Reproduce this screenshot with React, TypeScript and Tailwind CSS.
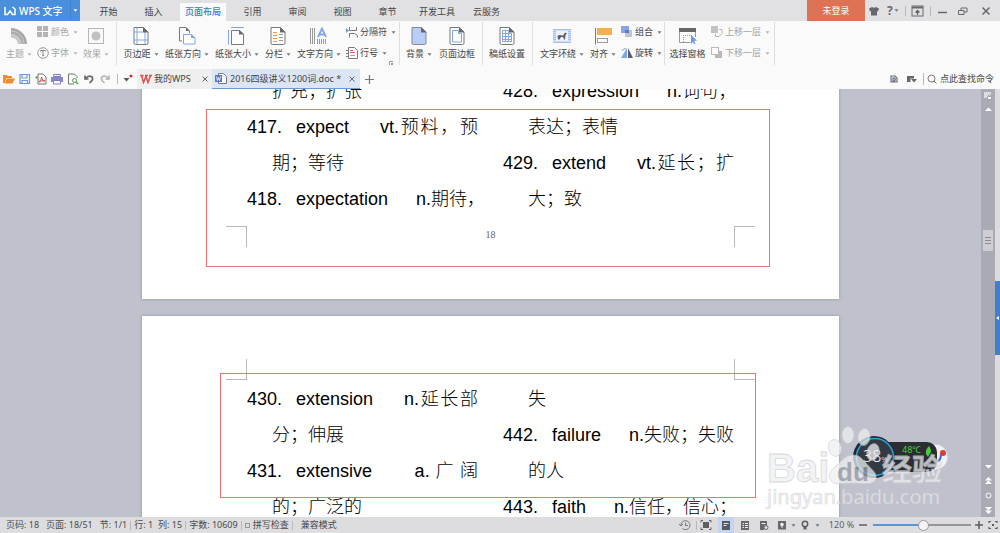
import React from 'react';

type Kids = { children?: React.ReactNode };

const G = '#77797d';
const B = '#7ea6ec';

function Svg({ w, h, children }: Kids & { w: number; h: number }) {
  return (
    <svg width={w} height={h} viewBox={`0 0 ${w} ${h}`} fill="none" className="block shrink-0" aria-hidden="true">
      {children}
    </svg>
  );
}

function Caret({ className = 'text-[#777]' }: { className?: string }) {
  return (
    <span className={className}>
      <Svg w={5} h={3}>
        <path d="M0.5 0.2h4L2.5 2.8z" fill="currentColor" />
      </Svg>
    </span>
  );
}

function Sep({ className = 'h-[10px]' }: { className?: string }) {
  return <span className={`w-px shrink-0 bg-[#b9b9bc] ${className}`} />;
}

const Sheet = ({ children }: Kids) => (
  <Svg w={20} h={20}>
    <path d="M3 1.500h9.500l4.500 4.500v11q0 1.500-1.500 1.500h-11q-1.500 0-1.500-1.500z" fill="#fff" stroke={G} />
    {children}
    <path d="M12 1v5.500h5.500z" fill="#66686c" />
  </Svg>
);

const icons = {
  theme: (
    <Svg w={20} h={20}>
      <path d="M2 2a16 16 0 0 1 16 16h-5.500A10.500 10.500 0 0 0 2 8z" fill="#a9a9a9" />
      <path d="M2 5a13 13 0 0 1 13 13" stroke="#c9c9c9" />
      <path d="M2 8a10.500 10.500 0 0 1 10.500 10H9A7 7 0 0 0 2 11.500z" fill="#c6c6c6" />
    </Svg>
  ),
  effect: (
    <Svg w={20} h={20}>
      <rect x="2.500" y="2.500" width="15" height="15" stroke="#b5b5b5" />
      <circle cx="10" cy="10" r="4.500" fill="#c0c0c0" />
    </Svg>
  ),
  margins: (
    <Sheet>
      <path d="M6 2v16M14 6v12M3 6h9M3 14h14" stroke={B} />
    </Sheet>
  ),
  orientation: (
    <Svg w={20} h={20}>
      <path d="M5 15H2.500V1.500H9L12.500 5v2" stroke={G} />
      <path d="M9 1.500V5h3.500z" fill="#66686c" />
      <path d="M6.500 8.500h8l3.500 3.500v6H6.500z" fill="#fff" stroke={B} />
      <path d="M14 8.500V12h4z" fill={B} />
    </Svg>
  ),
  size: (
    <Svg w={20} h={20}>
      <path d="M1.500 4v14.500M4 1.500h13" stroke={B} />
      <path d="M4.500 4.500h8L16.500 8v10.500h-12z" fill="#fff" stroke={G} />
      <path d="M12 4v4.500h5z" fill="#66686c" />
    </Svg>
  ),
  columns: (
    <Sheet>
      <path d="M5 6.500h4M5 9.500h4M5 12.500h4M5 15.500h4" stroke="#ef9a5f" />
      <path d="M11 8.500h4M11 11.500h4M11 14.500h4" stroke="#999" />
    </Sheet>
  ),
  textdir: (
    <Svg w={20} h={20}>
      <path d="M1.500 2v16M3.500 2v16M5.500 2v16M8.500 13v5M10.500 13v5M12.500 13v5M14.500 13v5M16.500 13v5" stroke="#96989c" />
      <path d="M9 11l4-8.500 4 8.500M10.500 8.500h5" stroke={B} strokeWidth="1.800" />
    </Svg>
  ),
  background: (
    <Svg w={20} h={20}>
      <path d="M3 1.500h9.500l4.500 4.500v11q0 1.500-1.500 1.500h-11q-1.500 0-1.500-1.500z" fill="#b8cef5" stroke="#84899a" />
      <path d="M12 1v5.500h5.500z" fill="#66686c" />
    </Svg>
  ),
  border: (
    <Sheet>
      <path d="M5.500 4.500h6v3h3v8.500h-9z" stroke={B} />
    </Sheet>
  ),
  grid: (
    <Sheet>
      <path d="M5.500 4.500h6v3h3v8h-9zM8.500 4.500v11M11.500 7v9M5.500 7.500h7M5.500 10.500h9M5.500 13.500h9" stroke={B} />
    </Sheet>
  ),
  wrap: (
    <Svg w={20} h={20}>
      <rect x="1" y="3" width="18" height="14" fill="#cddcf8" />
      <path d="M1 3.500h18M1 5.500h18M1 7.500h18M1 9.500h18M1 11.500h18M1 13.500h18M1 16.500h18" stroke="#a3bff1" />
      <rect x="4" y="5" width="12" height="10" fill="#edf2fc" />
      <path d="M5.500 10l1.500-1 4 .5L13 6.500l2 1-1.500 1.500-.5 4.500h-1l-1-2.500H9l-1.500 2.500H6z" fill="#5d5f63" />
    </Svg>
  ),
  align: (
    <Svg w={20} h={20}>
      <path d="M2.500 2v16.500" stroke={G} />
      <rect x="4" y="2" width="15" height="7" fill="#f2b24a" />
      <rect x="4.500" y="12.500" width="10" height="4" fill="#fff" stroke="#999" />
    </Svg>
  ),
  pane: (
    <Svg w={20} h={20}>
      <rect x="1" y="2" width="17" height="4" fill="#66686c" />
      <path d="M1.500 6v10.500h11M17.500 6v5" stroke="#999" />
      <path d="M5 9.500h10M5.500 9v7" stroke="#999" strokeDasharray="1 1" />
      <path d="M13 9v9l2-2 1.500 2.500 1-1-1.500-2.500 3-.5z" fill="#6f98ea" />
    </Svg>
  ),
};

const small = {
  color: (
    <Svg w={12} h={12}>
      <path d="M0 0h5v5H0zM6 0h5v5H6zM0 6h5v5H0zM6 6h5v5H6z" fill="#b3b3b3" />
    </Svg>
  ),
  font: (
    <Svg w={12} h={12}>
      <circle cx="6" cy="6" r="5.300" stroke="#999" />
      <path d="M3.500 4.500v-1h5v1M6 3.500v5M5 8.700h2" stroke="#888" />
    </Svg>
  ),
  breaks: (
    <Svg w={12} h={12}>
      <path d="M0 2l3 2.500L0 7z" fill="#6d98e8" />
      <path d="M3.500 1v3.500h7V1M3.500 11.500v-4h5l3 2v2" stroke={G} />
    </Svg>
  ),
  lineno: (
    <Svg w={12} h={12}>
      <path d="M2.500 .5h6l3 3v8h-9z" fill="#fff" stroke={G} />
      <path d="M0 3.500h2M0 6.500h2M0 9.500h2" stroke={G} />
      <path d="M4 3.500h3M4 5.500h5" stroke="#e06060" />
      <path d="M4 8.500h5" stroke="#aaa" />
    </Svg>
  ),
  group: (
    <Svg w={12} h={12}>
      <rect x="4" y="4" width="7" height="7" fill="#c3c5ca" />
      <rect x="0" y="0" width="8" height="7" fill="#87a4e8" />
      <rect x="4" y="4" width="4" height="3" fill="#5f7cc4" />
    </Svg>
  ),
  rotate: (
    <Svg w={12} h={12}>
      <path d="M6 1v10H0z" fill="#7ea6ec" />
      <path d="M7 1v10h5z" fill="#5d6066" />
      <path d="M1 4q1-2.500 4-2.500" stroke="#7ea6ec" />
    </Svg>
  ),
  up: (
    <Svg w={12} h={12}>
      <rect x="0" y="0" width="7" height="7" fill="#c2c2c2" />
      <path d="M8 3.500h3v4L8 10.500H4.500V7.500" stroke="#b5b5b5" />
    </Svg>
  ),
  down: (
    <Svg w={12} h={12}>
      <rect x=".5" y=".5" width="7" height="7" stroke="#bbb" />
      <path d="M8 4h3v7H4V8h4z" fill="#b8b8b8" />
    </Svg>
  ),
};

function Big({ icon, label, w, caret, dim }: { icon: React.ReactNode; label: string; w: string; caret?: boolean; dim?: boolean }) {
  return (
    <button className={`flex shrink-0 flex-col items-center gap-[2px] pt-1 ${w} ${dim ? 'text-[#a5a5a5]' : 'text-[#444]'}`}>
      {icon}
      <span className="flex items-center gap-[3px] leading-3 whitespace-nowrap">
        {label}
        {caret && <Caret className={dim ? 'text-[#b5b5b5]' : 'text-[#777]'} />}
      </span>
    </button>
  );
}

function Pair({ items, w, dim }: { items: [React.ReactNode, string][]; w: string; dim?: boolean }) {
  return (
    <div className={`flex shrink-0 flex-col gap-[9px] pt-1 pl-[2px] ${w}`}>
      {items.map(([icon, label]) => (
        <button key={label} className={`flex items-center gap-[2px] leading-3 whitespace-nowrap ${dim ? 'text-[#a5a5a5]' : 'text-[#444]'}`}>
          {icon}
          {label}
          <span className="pl-[2px]"><Caret className={dim ? 'text-[#b5b5b5]' : 'text-[#777]'} /></span>
        </button>
      ))}
    </div>
  );
}

function TitleBar() {
  return (
    <header className="flex h-[21px] shrink-0 items-stretch bg-[#e1e1e3] text-[#444]">
      <button className="flex w-20 shrink-0 items-center bg-[#4a8fdc] pl-1 text-white">
        <Svg w={12} h={10}>
          <path d="M1 1v7.500h2.500L6 5l2.500 3.500H11V3L8.500 1" stroke="#fff" strokeWidth="1.500" />
        </Svg>
        <span className="ml-[3px] text-[10px] leading-4 font-medium whitespace-nowrap">WPS 文字</span>
        <span className="ml-auto flex h-full w-[10px] items-center justify-center border-l border-[#4384cf]">
          <Caret className="text-white" />
        </span>
      </button>
      <nav className="ml-[6px] flex shrink-0 items-end">
        {['开始', '插入'].map((t) => (
          <button key={t} className="h-[18px] w-[45px]">{t}</button>
        ))}
        <button className="mx-1 h-[18px] w-[46px] bg-[#fafafa] font-medium text-[#3a7bcb]">页面布局</button>
        {['引用', '审阅', '视图', '章节'].map((t) => (
          <button key={t} className="h-[18px] w-[45px]">{t}</button>
        ))}
        <button className="h-[18px] w-[54px]">开发工具</button>
        <button className="h-[18px] w-[45px]">云服务</button>
      </nav>
      <button className="ml-auto w-[58px] shrink-0 bg-[#de7254] text-white">未登录</button>
      <div className="flex w-[135px] shrink-0 items-center pl-1 text-[#66686c]">
        <button aria-label="皮肤">
          <Svg w={10} h={10}>
            <path d="M3 1q2 1.500 4 0l3 1.500-1 3-1-.5v4.500H2V5l-1 .5-1-3z" fill="currentColor" />
          </Svg>
        </button>
        <button aria-label="帮助" className="ml-2 flex items-center gap-px text-[12px] leading-4 font-bold">
          ?<Caret />
        </button>
        <Sep className="ml-[6px] h-[10px]" />
        <button aria-label="功能区" className="ml-[5px]">
          <Svg w={13} h={12}>
            <rect x="1" y="1" width="11" height="10" stroke="currentColor" />
            <path d="M1 2.500h11" stroke="currentColor" strokeWidth="2" />
            <path d="M6.500 10V6M4.500 7.500l2-2 2 2" stroke="currentColor" strokeWidth="1.300" />
          </Svg>
        </button>
        <Sep className="ml-[6px] h-[10px]" />
        <button aria-label="最小化" className="ml-[7px]">
          <Svg w={10} h={10}><path d="M0 6.500h9" stroke="currentColor" strokeWidth="1.500" /></Svg>
        </button>
        <button aria-label="还原" className="ml-[10px]">
          <Svg w={10} h={10}><path d="M.5 4.500h5.500v4H.5zM3 4V2h6v4H6" stroke="currentColor" /></Svg>
        </button>
        <button aria-label="关闭" className="ml-[13px]">
          <Svg w={10} h={10}><path d="M1.500 1.500l7 7M8.500 1.500l-7 7" stroke="currentColor" strokeWidth="1.500" /></Svg>
        </button>
      </div>
    </header>
  );
}

function Group({ children, className }: Kids & { className: string }) {
  return <div className={`flex shrink-0 border-r border-[#dedede] ${className}`}>{children}</div>;
}

function Ribbon() {
  return (
    <section className="flex h-[48px] shrink-0 overflow-hidden pt-px pb-1">
      <Group className="w-[117px] pl-[3px]">
        <Big icon={icons.theme} label="主题" w="w-8" caret dim />
        <Pair w="w-[45px]" dim items={[[small.color, '颜色'], [small.font, '字体']]} />
        <Big icon={icons.effect} label="效果" w="w-8" caret dim />
      </Group>
      <Group className="relative w-[283px] pl-[3px]">
        <Big icon={icons.margins} label="页边距" w="w-[42px]" caret />
        <Big icon={icons.orientation} label="纸张方向" w="w-[50px]" caret />
        <Big icon={icons.size} label="纸张大小" w="w-[50px]" caret />
        <Big icon={icons.columns} label="分栏" w="w-8" caret />
        <Big icon={icons.textdir} label="文字方向" w="w-[50px]" caret />
        <Pair w="w-[50px]" items={[[small.breaks, '分隔符'], [small.lineno, '行号']]} />
        <span className="absolute right-[6px] bottom-0">
          <Svg w={4} h={4}><path d="M.5 4V.5H4M2 2l1.500 1.500M3.500 2v1.500H2" stroke="#999" /></Svg>
        </span>
      </Group>
      <Group className="w-[83px] pl-[3px]">
        <Big icon={icons.background} label="背景" w="w-8" caret />
        <Big icon={icons.border} label="页面边框" w="w-[44px]" />
      </Group>
      <Group className="w-[50px]">
        <Big icon={icons.grid} label="稿纸设置" w="w-12" />
      </Group>
      <Group className="w-[132px] pl-[4px]">
        <Big icon={icons.wrap} label="文字环绕" w="w-[50px]" caret />
        <Big icon={icons.align} label="对齐" w="w-8" caret />
        <Pair w="w-[45px]" items={[[small.group, '组合'], [small.rotate, '旋转']]} />
      </Group>
      <Group className="w-[110px] pl-px">
        <Big icon={icons.pane} label="选择窗格" w="w-[43px]" />
        <Pair w="w-[65px]" dim items={[[small.up, '上移一层'], [small.down, '下移一层']]} />
      </Group>
    </section>
  );
}

const quick: [string, React.ReactNode][] = [
  ['打开', <path key="a" d="M0 10V2h4l1 1h4v2H3.500L1.500 10M1.500 10.500L4 5.500h8l-2.500 5z" fill="#f08c2e" />],
  ['保存', <path key="a" d="M1 1.500h9.500v9H1zM3 1.500v3.500h5V1.500M3 10.500v-3h5.500v3" stroke="#6c98e0" strokeWidth="1.200" />],
  ['输出为PDF', <g key="a"><path d="M3 1h5l3 3v7H3z" stroke="#777" /><path d="M4 9q3-3 2.500-5Q7 8 10 8 6.500 7 4 9z" stroke="#d4504c" /><path d="M0 4.500l2.500-2v4z" fill="#5ba85b" /></g>],
  ['打印', <g key="a"><path d="M2.500 1.500h7v2h-7z" stroke="#7e7ac4" /><path d="M0 4h12v5H0z" fill="#8b86cc" /><path d="M2.500 7.500h7v3.500h-7z" fill="#fff" stroke="#7e7ac4" /></g>],
  ['打印预览', <g key="a"><path d="M7 11H1.500V1h6l2.500 2.500V5" stroke="#777" /><circle cx="7.500" cy="7.500" r="2" stroke="#4e9e50" /><path d="M9 9l2 2" stroke="#4e9e50" strokeWidth="1.500" /></g>],
  ['撤销', <path key="a" d="M2 2.500V6h3.500M2.500 5.500Q6 1.500 9 4q2 3-2.500 6" stroke="#66686c" strokeWidth="1.700" />],
  ['恢复', <path key="a" d="M10 2.500V6H6.500M9.500 5.500Q6 1.500 3 4q-2 3 2.500 6" stroke="#b0b0b0" strokeWidth="1.500" />],
];

function CloseX() {
  return <Svg w={6} h={6}><path d="M.5 .5l5 5M5.500 .5l-5 5" stroke="#666" /></Svg>;
}

function QuickBar() {
  return (
    <section className="flex h-[20px] shrink-0 items-stretch text-[#444]">
      <div className="flex items-center gap-1 pl-[3px]">
        {quick.map(([name, art]) => (
          <button key={name} aria-label={name}><Svg w={12} h={12}>{art}</Svg></button>
        ))}
      </div>
      <div className="flex w-[26px] shrink-0 items-center">
        <Sep className="ml-[6px] h-[10px]" />
        <button aria-label="更多" className="ml-[5px]">
          <Svg w={10} h={10}>
            <path d="M.5 4h6l-3 3.500z" fill="#555" />
            <circle cx="8" cy="2" r="1.500" fill="#f02020" />
          </Svg>
        </button>
      </div>
      <div className="flex w-[75px] shrink-0 items-center bg-[#efefef] pl-[3px]">
        <Svg w={12} h={10}>
          <path d="M0 1.500h3.500M1.500 1.500L3.500 8.500l2.500-6 2 6 2.500-7M5 1.500h3M9 1.500h3" stroke="#e0504c" strokeWidth="1.500" />
        </Svg>
        <button className="ml-[2px] whitespace-nowrap">我的WPS</button>
        <button aria-label="关闭我的WPS" className="mr-1 ml-auto"><CloseX /></button>
      </div>
      <div className="flex w-[148px] shrink-0 items-center border-b border-[#6d9bd8] bg-[#dbe5f3] pl-[3px]">
        <Svg w={12} h={11}>
          <path d="M3.500 .5h5l3 3v7h-8z" fill="#fff" stroke={G} />
          <path d="M0 2h7v7H0z" fill="#5b77c2" />
          <path d="M1.500 3.500l1 4 1-3 1 3 1-4" stroke="#fff" strokeWidth=".8" />
        </Svg>
        <button className="ml-[3px] whitespace-nowrap">2016四级讲义1200词.doc *</button>
        <button aria-label="关闭文档" className="mr-[5px] ml-auto"><CloseX /></button>
      </div>
      <button aria-label="新建" className="ml-[5px]">
        <Svg w={9} h={9}><path d="M4.500 0v9M0 4.500h9" stroke="#777" strokeWidth="1.200" /></Svg>
      </button>
      <div className="ml-auto flex items-center pr-[6px]">
        <button aria-label="文档">
          <Svg w={8} h={8}><path d="M1 1h4l2 2v4H1zM3 3v3h1.500q1.500-1.500 0-3z" stroke="#66707c" strokeWidth="1.200" /></Svg>
        </button>
        <button aria-label="标记" className="ml-[9px]">
          <Svg w={10} h={8}><path d="M0 1h7v2.500H3.500V7H0zM4 4h6L7 7.500z" fill="#66686c" /></Svg>
        </button>
        <Sep className="ml-[6px] h-3" />
        <button className="ml-[3px] flex items-center gap-[3px] whitespace-nowrap">
          <Svg w={10} h={10}>
            <circle cx="4.500" cy="4.500" r="3.500" stroke="#777" />
            <path d="M7 7l2.500 2.500" stroke="#777" />
          </Svg>
          点此查找命令
        </button>
      </div>
    </section>
  );
}

function Entry({ n, word, justify, children }: Kids & { n: string; word: string; justify?: boolean }) {
  return (
    <p className="flex h-9 whitespace-nowrap">
      <span className="w-[49px] shrink-0">{n}.</span>
      <span className="shrink-0">{word}</span>
      {justify ? (
        <span className="ml-[31px] flex-1 [text-align-last:justify]">{children}</span>
      ) : (
        <span className="ml-7">{children}</span>
      )}
    </p>
  );
}

function More({ children }: Kids) {
  return <p className="h-9 pl-[25px] whitespace-nowrap">{children}</p>;
}

function Columns({ children }: Kids) {
  return (
    <div className="grid grid-cols-2 gap-x-[25px] px-[105px] font-['Liberation_Sans','Noto_Sans_CJK_SC',sans-serif] text-[18px] leading-9 font-light text-black">
      {children}
    </div>
  );
}

function Pages() {
  return (
    <main className="min-w-0 flex-1 overflow-hidden bg-[#bfc2cc]">
      <article className="relative mx-auto -mt-4 h-[226px] w-[697px] bg-white shadow-[0_0_3px_#8f929c]">
        <Columns>
          <div>
            <More>扩充；扩张</More>
            <Entry n="417" word="expect" justify>vt.预料，预</Entry>
            <More>期；等待</More>
            <Entry n="418" word="expectation">n.期待，</Entry>
          </div>
          <div>
            <Entry n="428" word="expression">n.词句；</Entry>
            <More>表达；表情</More>
            <Entry n="429" word="extend" justify>vt.延长；扩</Entry>
            <More>大；致</More>
          </div>
        </Columns>
        <footer className="flex justify-between px-[84px] pt-[9px]">
          <span className="size-[21px] border-t border-r border-[#b8b8b8]" />
          <span className="pt-[3px] font-['Liberation_Serif',serif] text-[10px] leading-3 text-[#666]">18</span>
          <span className="size-[21px] border-t border-l border-[#b8b8b8]" />
        </footer>
        <div className="absolute top-9 left-16 h-[158px] w-[564px] border border-[#fa7070]" />
      </article>
      <article className="relative mx-auto mt-[17px] h-[900px] w-[697px] bg-white pt-[43px] shadow-[0_0_3px_#8f929c]">
        <div className="mb-px flex justify-between px-[84px]">
          <span className="size-[21px] border-r border-b border-[#b8b8b8]" />
          <span className="size-[21px] border-b border-l border-[#b8b8b8]" />
        </div>
        <Columns>
          <div>
            <Entry n="430" word="extension" justify>n.延长部</Entry>
            <More>分；伸展</More>
            <Entry n="431" word="extensive" justify>&nbsp; a. 广 阔</Entry>
            <More>的；广泛的</More>
          </div>
          <div>
            <More>失</More>
            <Entry n="442" word="failure">n.失败；失败</Entry>
            <More>的人</More>
            <Entry n="443" word="faith">n.信任，信心；</Entry>
          </div>
        </Columns>
        <div className="absolute top-[57px] left-[78px] h-[125px] w-[536px] border border-[#fa7070]" />
      </article>
    </main>
  );
}

function ScrollRail() {
  return (
    <aside className="flex w-[19px] shrink-0">
      <div className="flex w-[14px] flex-col items-center bg-[#a9aab3] pt-[3px] pb-[3px]">
        <Svg w={10} h={8}>
          <path d="M1 0h7v6H1z" fill="#dcdde2" />
          <path d="M4.500 4.500h4v3h-4zM5.500 4V3h2v1" fill="#fff" stroke="#8c8d96" strokeWidth=".7" />
        </Svg>
        <button aria-label="向上滚动" className="mt-[7px]"><Svg w={7} h={4}><path d="M0 4l3.500-3.500L7 4z" fill="#fff" /></Svg></button>
        <button aria-label="滚动条" className="mt-[119px] flex h-[21px] w-[10px] flex-col items-center justify-center gap-[2px] bg-[#cfcfd3]">
          <span className="h-px w-[6px] bg-[#8c8c92]" />
          <span className="h-px w-[6px] bg-[#8c8c92]" />
          <span className="h-px w-[6px] bg-[#8c8c92]" />
        </button>
        <div className="mt-auto flex flex-col items-center gap-[8px]">
          <button aria-label="向下滚动"><Svg w={7} h={4}><path d="M0 0h7L3.500 3.500z" fill="#fff" /></Svg></button>
          <button aria-label="上一页"><Svg w={7} h={7}><path d="M0 3.500L3.500 0 7 3.500zM0 7l3.500-3.500L7 7z" fill="#fff" /></Svg></button>
          <button aria-label="选择浏览对象"><Svg w={7} h={7}><circle cx="3.500" cy="3.500" r="2.500" stroke="#fff" /></Svg></button>
          <button aria-label="下一页"><Svg w={7} h={7}><path d="M0 0h7L3.500 3.500zM0 3.500h7L3.500 7z" fill="#fff" /></Svg></button>
        </div>
      </div>
      <div className="w-[5px] bg-[#dcdcde] pt-[192px]">
        <button aria-label="展开任务窗格" className="flex h-[74px] w-[5px] items-center justify-center bg-[#3e80d0]">
          <Svg w={3} h={4}><path d="M3 0v4L0 2z" fill="#fff" /></Svg>
        </button>
      </div>
    </aside>
  );
}

function Gadget() {
  return (
    <div className="absolute right-[51px] bottom-[38px] h-[44px] w-[98px]">
      <svg width="98" height="44" viewBox="0 0 98 44" fill="none" aria-hidden="true">
        <circle cx="84" cy="22" r="13" fill="#f0f1f3" stroke="#c8cad0" />
        <path d="M82 27q8 1 8-8" stroke="#3a74d4" strokeWidth="2" />
        <circle cx="92" cy="18" r="3" fill="#e03a3a" />
        <rect x="20" y="7" width="66" height="30" rx="10" fill="#2b2d33" />
        <circle cx="23" cy="22" r="21" fill="#23272e" />
        <circle cx="24" cy="22" r="18.500" fill="#333b42" stroke="#29a3e0" strokeWidth="1.500" />
        <path d="M78 11q-4 4-3 8l2 3 1-2q4-3 0-9z" fill="#46cf38" />
      </svg>
      <span className="absolute top-[11px] left-3 text-[16px] leading-5 font-light text-white">
        38<span className="text-[8px]">%</span>
      </span>
      <span className="absolute top-[9px] left-[51px] text-[9px] leading-3 text-[#46cf38]">48℃</span>
    </div>
  );
}

function Watermark() {
  return (
    <div className="pointer-events-none absolute right-[50px] bottom-0 h-[92px] w-[185px] opacity-75">
      <svg width="185" height="92" viewBox="0 0 185 92" fill="#eeeff1" stroke="#cbccd1" strokeWidth=".8" aria-hidden="true">
        <ellipse cx="70" cy="23" rx="6.500" ry="8.500" transform="rotate(-12 70 23)" />
        <ellipse cx="83" cy="10" rx="6" ry="8.500" />
        <ellipse cx="99" cy="12" rx="6" ry="8.500" transform="rotate(8 99 12)" />
        <ellipse cx="108" cy="27" rx="6" ry="8.500" transform="rotate(15 108 27)" />
        <path
          fillRule="evenodd"
          d="M88 30c-8 0-11 6-17 11-6 5-8 9-6 13 2 6 9 5 14 4.500 5-.5 12-.5 17 0 6 .5 13 1 15-5 1-5-3-8-7-12-5-5-8-11.500-16-11.500z"
        />
        <g fontFamily="Liberation Sans, Noto Sans CJK SC, sans-serif" fontWeight="bold">
          <text x="2" y="57" fontSize="40">Bai</text>
          <text x="72" y="56" fontSize="26" stroke="none" fill="#9b9ea6">du</text>
          <text x="117" y="55" fontSize="30">经验</text>
        </g>
        <text x="2" y="79" fontSize="20" strokeWidth=".6" fontFamily="Noto Sans, sans-serif">jingyan.baidu.com</text>
      </svg>
    </div>
  );
}

function StatusBar() {
  return (
    <footer className="flex h-4 shrink-0 items-center bg-[#dddddf] pr-[2px] pl-[6px] leading-4 whitespace-nowrap text-[#4a4a4a]">
      <span>页码: 18</span>
      <span className="ml-[7px]">页面: 18/51</span>
      <span className="ml-[7px]">节: 1/1</span>
      <Sep className="mx-[3px] h-[9px]" />
      <span>行: 1</span>
      <span className="ml-[5px]">列: 15</span>
      <Sep className="mx-[3px] h-[9px]" />
      <span>字数: 10609</span>
      <Sep className="mx-[3px] h-[9px]" />
      <label className="flex items-center gap-[3px]">
        <input type="checkbox" className="size-[5px] appearance-none border border-[#999]" />
        拼写检查
      </label>
      <Sep className="mx-[3px] h-[9px]" />
      <span className="ml-[5px]">兼容模式</span>
      <div className="ml-auto flex items-center text-[#5c5e62]">
        <button aria-label="历史">
          <Svg w={12} h={12}>
            <path d="M2 6a4.500 4.500 0 1 1 1.500 3.500M0 5l2 2 2-2M6.500 3.500V6.500H9" stroke="#777" />
          </Svg>
        </button>
        <Sep className="ml-[5px] h-[9px]" />
        <button aria-label="全屏" className="ml-[3px]">
          <Svg w={12} h={12}>
            <path d="M1 3.500V1.500h2M9 1.500h2v2M11 8.500v2H9M3 10.500H1v-2" stroke="currentColor" />
            <rect x="3" y="3" width="6" height="6" fill="currentColor" />
          </Svg>
        </button>
        <button aria-label="页面视图" className="ml-[6px] flex h-4 w-4 items-center justify-center bg-[#c3d5f0]">
          <Svg w={10} h={10}>
            <rect x="1" y="1" width="8" height="9" fill="#55585e" />
            <path d="M2.500 3.500h5M2.500 5.500h3" stroke="#dfe6f2" />
          </Svg>
        </button>
        <button aria-label="大纲视图" className="ml-[6px]">
          <Svg w={10} h={10}>
            <rect x="1" y="1" width="8" height="9" fill="#66686c" />
            <path d="M2.500 3.500H4M5 3.500h3M2.500 5.500H4M5 5.500h3M2.500 7.500H4M5 7.500h3" stroke="#eee" />
          </Svg>
        </button>
        <button aria-label="网页视图" className="ml-[9px]">
          <Svg w={10} h={10}>
            <path d="M1 1h7v4.500H5V10H1z" fill="#66686c" />
            <circle cx="7" cy="7.500" r="2" stroke="#66686c" />
            <path d="M2.500 3.500h4" stroke="#eee" />
          </Svg>
        </button>
        <button aria-label="护眼模式" className="ml-2 flex items-center gap-1">
          <Svg w={10} h={10}>
            <rect x="1" y="1" width="8" height="8.500" fill="#66686c" />
            <circle cx="5" cy="4.500" r="1.800" fill="#eee" />
            <path d="M5 5v3" stroke="#eee" />
          </Svg>
          <Caret />
        </button>
        <button aria-label="标注" className="ml-1 flex items-center gap-[5px]">
          <Svg w={10} h={10}>
            <circle cx="5" cy="4" r="2.700" stroke="currentColor" strokeWidth="1.500" />
            <path d="M3.500 6.500V10L5 9l1.500 1V6.500z" fill="currentColor" />
          </Svg>
          <Caret />
        </button>
        <button className="ml-2 w-[27px]">120 %</button>
        <button aria-label="缩小" className="ml-1"><Svg w={8} h={8}><path d="M0 4h8" stroke="currentColor" strokeWidth="1.500" /></Svg></button>
        <input
          type="range"
          aria-label="缩放比例"
          min={0}
          max={100}
          defaultValue={52}
          className="ml-[6px] h-[11px] w-[98px] appearance-none bg-[linear-gradient(to_right,#5a94dc_52%,#96969a_52%)] bg-[length:100%_2px] bg-center bg-no-repeat [&::-webkit-slider-thumb]:size-[11px] [&::-webkit-slider-thumb]:appearance-none [&::-webkit-slider-thumb]:rounded-full [&::-webkit-slider-thumb]:border [&::-webkit-slider-thumb]:border-[#999] [&::-webkit-slider-thumb]:bg-[#f3f3f4]"
        />
        <button aria-label="放大" className="ml-1"><Svg w={8} h={8}><path d="M0 4h8M4 0v8" stroke="currentColor" strokeWidth="1.500" /></Svg></button>
        <button aria-label="适合窗口" className="ml-[5px]">
          <Svg w={10} h={10}>
            <path d="M1 3V1.500h2M7 1.500h2V3M9 7v1.500H7M3 8.500H1V7" stroke="currentColor" strokeWidth="1.200" />
            <path d="M4 4h2v2H4z" fill="currentColor" />
          </Svg>
        </button>
      </div>
    </footer>
  );
}

export default function App() {
  return (
    <div className="flex h-screen flex-col overflow-hidden bg-[#fafafa] font-['Noto_Sans','Noto_Sans_CJK_SC',sans-serif] text-[9px]">
      <TitleBar />
      <Ribbon />
      <QuickBar />
      <div className="relative flex min-h-0 flex-1">
        <Pages />
        <ScrollRail />
        <Gadget />
        <Watermark />
      </div>
      <StatusBar />
    </div>
  );
}
